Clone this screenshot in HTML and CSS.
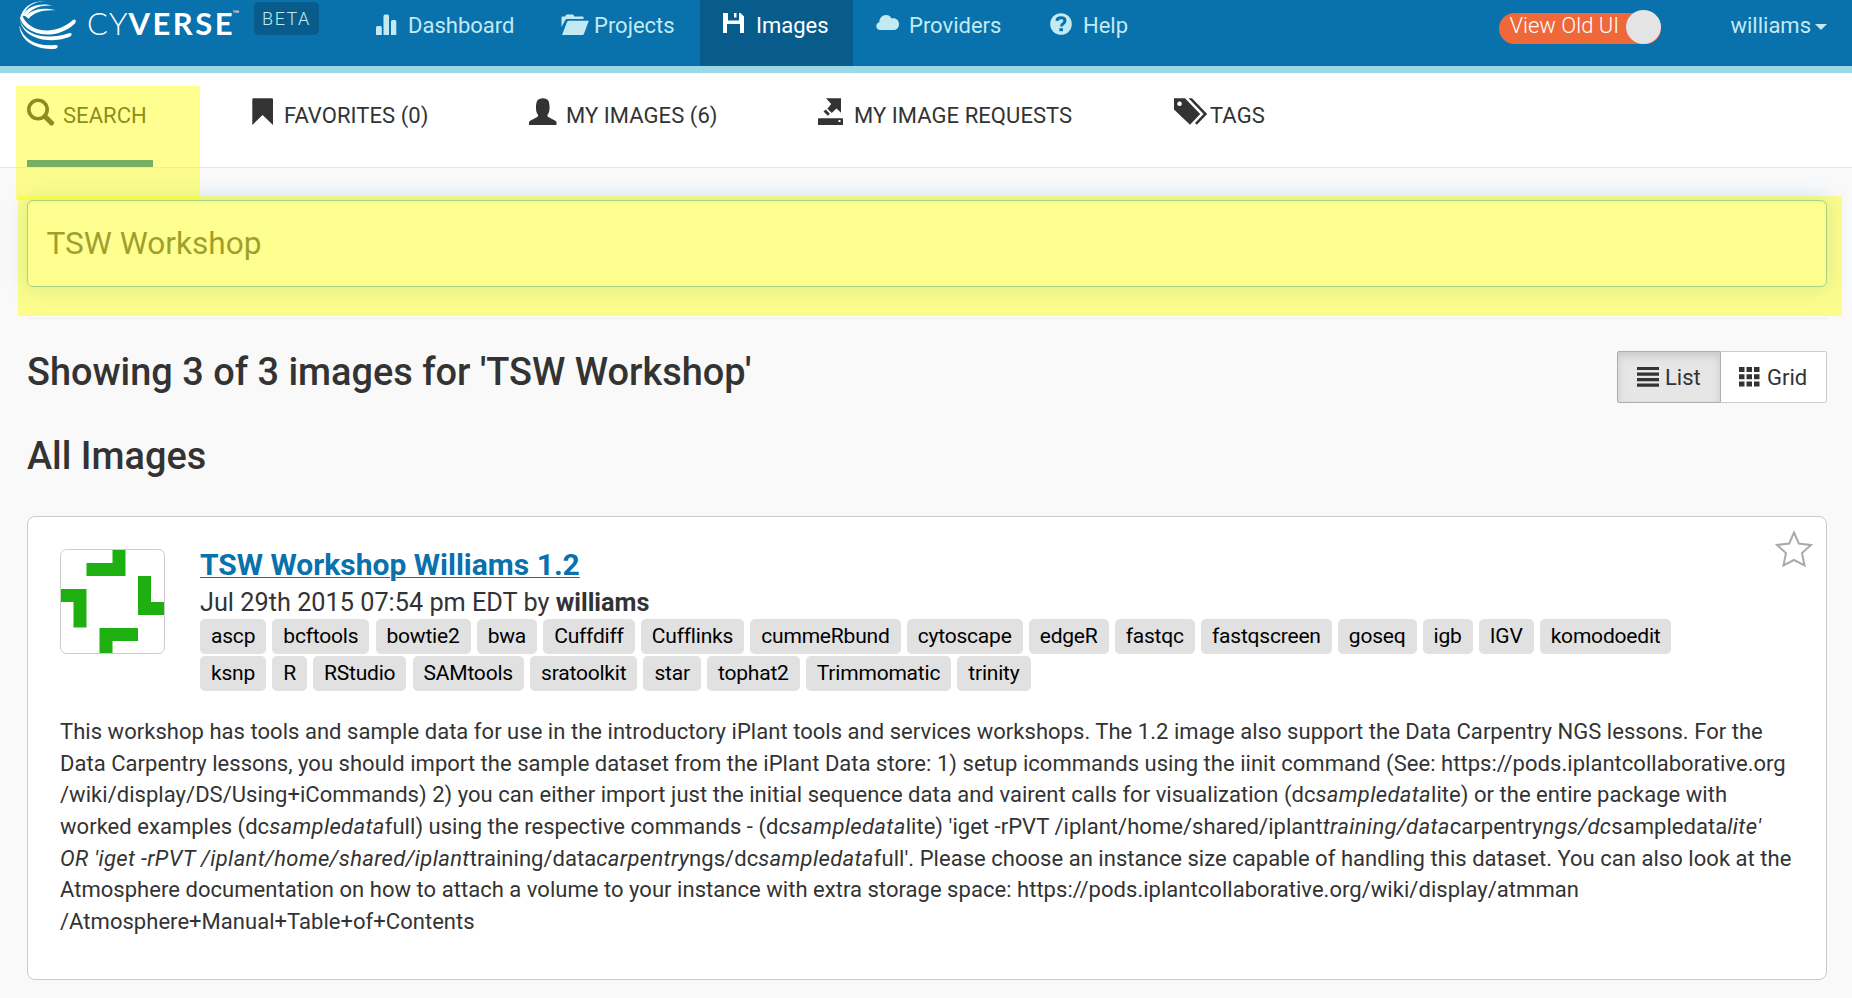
FILE: index.html
```html
<!DOCTYPE html>
<html lang="en">
<head>
<meta charset="utf-8">
<title>CyVerse Images</title>
<link rel="stylesheet" href="styles.css">
</head>
<body>
<header class="topbar">
  <a class="brand">
    <svg class="globe" width="60" height="50" viewBox="54 0 180 150" fill="#fff">
      <path d="M60 60C62 30 90 0 137 4C105 4 80 18 72 44Z"/>
      <path d="M68 46C82 20 115 6 160 17C118 14 92 26 80 50Z"/>
      <path d="M78 50C92 30 125 20 166 31C128 28 100 38 86 56Z"/>
      <path d="M66 44C82 94 160 112 218 61Q224 56 227 61Q229 66 224 71C166 124 82 106 62 60Z"/>
      <path d="M60 60C72 106 140 122 206 100Q213 98 215 102Q215 107 210 110C140 136 68 112 60 60Z"/>
      <path d="M58 76C70 122 112 140 165 135Q172 134 173 138Q174 144 167 146C110 152 60 124 58 76Z"/>
    </svg>
    <span class="wordmark"><span class="thin">CY</span><b>VERSE</b></span><span class="tm">™</span>
  </a>
  <span class="beta">BETA</span>
  <nav class="nav">
    <a class="nav-item w-dash"><span class="ico"><svg width="22" height="36" viewBox="0 0 22 36"><path d="M0 35v-7.500q0-1.500 1.500-1.500h3q1.300 0 1.300 1.500V35zM7.500 35V16.500Q7.500 14.500 9 14.500h2.500q1.500 0 1.500 2V35zM15 35V21.500q0-1.500 1.500-1.500h2.300q1.500 0 1.500 1.500V35z"/></svg></span>Dashboard</a>
    <a class="nav-item w-proj"><span class="ico"><svg width="28" height="36" viewBox="0 0 28 36"><path d="M.5 27V17.500Q.5 16.500 1.500 16.500H4l1.500-2H12l1.500 2h8q1 0 1 1V19H6.200q-1.400 0-2 1.200zM1 35L6 22q.5-1.300 2-1.300h19.800L23 33.800Q22.500 35 21.500 35z"/></svg></span>Projects</a>
    <a class="nav-item w-img active"><span class="ico"><svg width="22" height="36" viewBox="0 0 22 36"><path d="M0 13h5v7.500h11V13h1.500L21 16.500V33h-4v-9H4v9H0zM11 13h2.500v4.500H11z"/></svg></span>Images</a>
    <a class="nav-item w-prov"><span class="ico"><svg width="24" height="36" viewBox="0 0 24 36"><path d="M4.500 30C1.800 30 .3 28.300.3 26.200c0-2 1.300-3.500 3-3.900C3.300 18.500 6 15 10 15c3 0 4.800 1.600 5.600 3.600 4.200-1.200 7.400 1.800 7.400 5.600 0 3.500-2.500 5.800-5.600 5.800z"/></svg></span>Providers</a>
    <a class="nav-item w-help"><span class="ico"><svg width="22" height="36" viewBox="0 0 22 36"><circle cx="11" cy="24" r="10.800"/><path class="cut" d="M7 20.800q.2-3 4-3t4 2.800q0 1.700-1.700 2.800T11.500 26.500" fill="none" stroke-width="3"/><path class="cutfill" d="M9.300 28.200h3.700v3H9.300z"/></svg></span>Help</a>
  </nav>
  <div class="account">
    <div class="toggle"><span>View Old UI</span><i class="knob"></i></div>
    <a class="user">williams<i class="caret"></i></a>
  </div>
</header>

<div class="tabs">
  <a class="tab t-search current"><svg width="28" height="28" viewBox="0 0 28 28"><circle cx="11" cy="11.500" r="9.200" fill="none" stroke="#333" stroke-width="3.600"/><path d="M18 18.500l6.500 6.500" stroke="#333" stroke-width="5" stroke-linecap="round"/></svg><span>SEARCH</span></a>
  <a class="tab t-fav"><svg width="22" height="28" viewBox="0 0 22 28"><path d="M.3 27V1.500Q.3.300 1.500.300h18.300q1.200 0 1.200 1.200V27L10.600 17z"/></svg><span>FAVORITES (0)</span></a>
  <a class="tab t-mine"><svg width="28" height="28" viewBox="0 0 28 28"><path d="M0 27v-2.500q0-1.200 1.200-1.800l7-3.700q1.500-.8.800-2Q7 14.800 7 11V7.500Q7 .2 13.800.2T20.500 7.500V11q0 3.800-2 6-.7 1.200.8 2l7 3.700q1.200.6 1.200 1.800V27z"/></svg><span>MY IMAGES (6)</span></a>
  <a class="tab t-req"><svg width="26" height="28" viewBox="0 0 26 28"><path d="M8 .3h15v14.500l-4.500-4.300-4.800 4.600-4.300-4.300L13.200 6zM7.700 11.500l4.200 4.200-2 2L5.500 13.500zM1 20.300h23.200q.8 0 .8.800V27H0v-5.900q0-.8 1-.8zM20.500 22v2h2v-2z" fill-rule="evenodd"/></svg><span>MY IMAGE REQUESTS</span></a>
  <a class="tab t-tags"><svg width="34" height="28" viewBox="0 0 34 28"><path d="M0 .3h11L26.200 16 16 26.700 0 11.500zM5.500 3.500a2.300 2.300 0 1 0 .1 0z" fill-rule="evenodd"/><path d="M14.500.3H18L33.200 16 22.800 26.700 21 25l8.600-9z"/></svg><span>TAGS</span></a>
  <i class="marker marker-tab"></i>
</div>

<main class="page">
  <div class="searchbox">TSW Workshop<i class="marker marker-search"></i></div>
  <section class="results">
    <h2>Showing 3 of 3 images for 'TSW Workshop'</h2>
    <div class="switch">
      <a class="btn btn-list"><svg width="22" height="22" viewBox="0 0 22 22"><path d="M0 1h22v3H0zM0 6.600h22v3.200H0zM0 12h22v3.200H0zM0 17.500h22v3.300H0z"/></svg>List</a>
      <a class="btn btn-grid"><svg width="22" height="22" viewBox="0 0 22 22"><path d="M0 1h5.500v5H0zM7.500 1H13v5H7.500zM15 1h5.500v5H15zM0 8.300h5.500v5H0zM7.500 8.300H13v5H7.500zM15 8.300h5.500v5H15zM0 15.600h5.500v5H0zM7.500 15.600H13v5H7.500zM15 15.600h5.500v5H15z"/></svg>Grid</a>
    </div>
  </section>
  <h2 class="all">All Images</h2>

  <article class="card">
    <div class="card-head">
      <svg class="avatar" width="105" height="105" viewBox="0 0 105 105"><path fill="#1eb010" d="M52.500 1H65.500V27H26.500V14H52.500zM78 27H91V53H104V66H78zM1 40H26.500V78.500H13.500V53H1zM39.500 79H78V92H52.500V104H39.500z"/><rect x=".5" y=".5" width="104" height="104" rx="6" fill="none" stroke="#ccc"/></svg>
      <div class="info">
        <a class="title">TSW Workshop Williams 1.2</a>
        <div class="date">Jul 29th 2015 07:54 pm EDT by <b>williams</b></div>
        <div class="tags"><span>ascp</span><span>bcftools</span><span>bowtie2</span><span>bwa</span><span>Cuffdiff</span><span>Cufflinks</span><span>cummeRbund</span><span>cytoscape</span><span>edgeR</span><span>fastqc</span><span>fastqscreen</span><span>goseq</span><span>igb</span><span>IGV</span><span>komodoedit</span></div>
        <div class="tags r2"><span>ksnp</span><span>R</span><span>RStudio</span><span>SAMtools</span><span>sratoolkit</span><span>star</span><span>tophat2</span><span>Trimmomatic</span><span>trinity</span></div>
      </div>
      <svg class="star" width="38" height="38" viewBox="0 0 38 38"><path d="M19 2.500L23.800 13.500 36 15 27 23 29.500 35.500 19 30 8.500 35.500 11 23 2 15 14.200 13.500z" fill="none" stroke="#aaa" stroke-width="2"/></svg>
    </div>
    <p class="desc">This workshop has tools and sample data for use in the introductory iPlant tools and services workshops. The 1.2 image also support the Data Carpentry NGS lessons. For the<br>Data Carpentry lessons, you should import the sample dataset from the iPlant Data store: 1) setup icommands using the iinit command (See: https://pods.iplantcollaborative.org<br>/wiki/display/DS/Using+iCommands) 2) you can either import just the initial sequence data and vairent calls for visualization (dc<em>sampledata</em>lite) or the entire package with<br>worked examples (dc<em>sampledata</em>full) using the respective commands - (dc<em>sampledata</em>lite) 'iget -rPVT /iplant/home/shared/iplant<em>training/data</em>carpentry<em>ngs/dc</em>sampledata<em>lite'</em><br><em>OR 'iget -rPVT /iplant/home/shared/iplant</em>training/data<em>carpentry</em>ngs/dc<em>sampledata</em>full'. Please choose an instance size capable of handling this dataset. You can also look at the<br>Atmosphere documentation on how to attach a volume to your instance with extra storage space: https://pods.iplantcollaborative.org/wiki/display/atmman<br>/Atmosphere+Manual+Table+of+Contents</p>
  </article>
</main>
</body>
</html>
```
FILE: styles.css
```css
* { box-sizing: border-box; }
html, body { height: 100%; overflow: hidden; }
body { margin: 0; background: #f9f9f9; color: #333; font: 22px/31px Roboto, sans-serif; }
svg { display: block; flex: none; fill: currentColor; }

.topbar { display: flex; height: 73px; background: #0971ab; border-bottom: 7px solid #9bd9e8; color: #c3eaf2; }
.brand { display: flex; width: 254px; padding-left: 18px; color: #fff; }
.wordmark { margin-left: 9px; font: 31px/47px Lato, sans-serif; white-space: nowrap; }
.thin { font-weight: 300; letter-spacing: 1px; }
.wordmark b { margin-right: -2.500px; font-weight: 700; letter-spacing: 2.500px; }
.tm { font: 9px/28px Lato, sans-serif; }
.beta { width: 65px; height: 33px; margin-top: 2px; border-radius: 5px; background: #085c8c; font: 300 18px/34px Roboto, sans-serif; letter-spacing: 1.5px; text-align: center; }
.nav { display: flex; margin-left: 34px; }
.nav-item { display: flex; height: 66px; padding-left: 23px; line-height: 51px; }
.ico { width: 33px; }
.w-dash { width: 185px; }
.w-dash .ico { width: 32px; }
.w-proj { width: 162px; }
.w-img { width: 153px; }
.w-prov { width: 174px; }
.w-help { width: 124px; }
.active { background: #085c8c; color: #fff; }
.cut { stroke: #0971ab; }
.cutfill { fill: #0971ab; }
.account { display: flex; flex: 1; justify-content: flex-end; padding-right: 25px; line-height: 51px; }
.toggle { display: flex; width: 162px; height: 31px; margin: 13px 69px 0 0; padding-left: 10px; border-radius: 16px; background: #ee683a; color: #fff; font-weight: 300; line-height: 26px; justify-content: space-between; }
.knob { width: 35px; height: 34px; margin-top: -3px; border-radius: 50%; background: #e4e4e4; }
.user { display: flex; align-items: flex-start; }
.caret { margin: 24px 0 0 4px; border: 6px solid transparent; border-top-color: currentColor; border-bottom: 0; }

.tabs { position: relative; display: flex; height: 95px; padding: 25px 0 0 27px; border-bottom: 1px solid #e7e7e7; background: #fff; }
.tab { display: flex; height: 69px; line-height: 36px; letter-spacing: .06px; white-space: nowrap; }
.tab svg { margin-right: 8px; }
.current { border-bottom: 7px solid #0e71ab; }
.t-search { width: 126px; margin-right: 99px; }
.t-fav { width: 277px; }
.t-fav svg { margin-right: 10px; }
.t-mine { width: 289px; }
.t-mine svg { margin-right: 9px; }
.t-req { width: 356px; }
.t-req svg { margin-right: 10px; }
.t-tags svg { margin-right: 2px; }
.marker { position: absolute; background: rgba(255, 255, 0, .44); }
.marker-tab { z-index: 2; left: 16px; top: 13px; width: 184px; height: 114px; }

.page { padding: 32px 25px 0 27px; }
.searchbox { position: relative; height: 87px; padding-left: 18.500px; border: 1px solid #66afe9; border-radius: 6px; background: #fff; box-shadow: inset 0 1px 2px rgba(0,0,0,.075), 0 0 20px rgba(102,175,233,.45); color: #555; font-size: 31.600px; line-height: 85px; }
.marker-search { left: -10px; top: -5px; width: 1824px; height: 120px; }
.results { display: flex; justify-content: space-between; height: 106px; margin-top: 31px; border-top: 1px solid #eee; }
h2 { margin: 0; font-size: 37.900px; font-weight: 500; line-height: 50px; white-space: nowrap; }
.results h2 { padding-top: 28px; }
.switch { display: flex; height: 52px; margin-top: 32px; }
.btn { display: flex; padding: 14px 0 0 19px; border: 1px solid #ccc; background: #fff; line-height: 24px; }
.btn-list { width: 104px; border-color: #adadad; border-radius: 2px 0 0 2px; background: #e6e6e6; box-shadow: inset 0 4px 8px rgba(0,0,0,.125); }
.btn-list svg { margin-right: 6px; }
.btn-grid { width: 106px; padding-left: 18px; border-left: 0; border-radius: 0 2px 2px 0; }
.btn-grid svg { margin-right: 6px; }
.all { margin-top: 7px; }

.card { height: 464px; margin-top: 35px; border: 1px solid #ccc; border-radius: 8px; background: #fff; }
.card-head { display: flex; }
.avatar { margin: 32px 0 0 32px; }
.info { flex: 1; padding: 29px 0 0 35px; white-space: nowrap; }
.title { display: block; height: 37px; color: #0971ab; font-size: 30px; font-weight: 700; line-height: 38px; text-decoration: underline; text-decoration-thickness: 1px; text-underline-offset: 2px; }
.date { height: 36px; font-size: 25.280px; line-height: 39px; }
.tags { display: flex; gap: 6.100px; height: 36px; color: #000; font-size: 21px; line-height: 34px; letter-spacing: -.2px; }
.tags span { height: 35px; padding: 0 11px; border-radius: 5px; background: #e1e1e1; }
.r2 { margin-top: 1px; }
.star { margin: 13px 13px 0 0; }
.desc { margin: 24px 0 0 32px; font-size: 22px; line-height: 31.650px; letter-spacing: .035px; white-space: nowrap; }
.desc em { letter-spacing: .355px; }
```
